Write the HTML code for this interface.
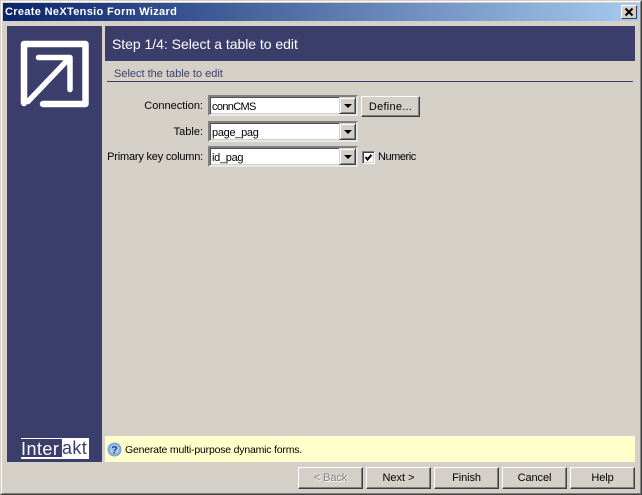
<!DOCTYPE html>
<html><head><meta charset="utf-8"><style>
*{box-sizing:border-box}
html,body{margin:0;padding:0;width:642px;height:495px;overflow:hidden;background:#d4d0c8;font-family:"Liberation Sans",sans-serif;font-size:11px;color:#000}
.a{position:absolute}
.t{position:absolute;white-space:nowrap;line-height:13px}
.win{left:0;top:0;width:642px;height:495px;border:1px solid;border-color:#d4d0c8 #404040 #404040 #d4d0c8}
.win2{left:1px;top:1px;width:640px;height:493px;border:1px solid;border-color:#fff #808080 #808080 #fff}
.title{left:3px;top:3px;width:636px;height:18px;background:linear-gradient(90deg,#0a246a,#a6caf0)}
.btn{position:absolute;height:22px;width:65px;background:#d4d0c8;border:1px solid;border-color:#fff #404040 #404040 #fff;box-shadow:inset -1px -1px 0 #808080;text-align:center;line-height:21px;letter-spacing:-.1px}
.combo{position:absolute;left:208px;width:150px;height:21px;background:#fff;border:2px solid;border-color:#808080 #e8e8e8 #e8e8e8 #808080;box-shadow:inset 1px 1px 0 #505050,inset -1px -1px 0 #d4d0c8}
.combo span{position:absolute;left:2px;top:3px;line-height:14px}
.arr{position:absolute;right:0;top:0;width:17px;height:17px;background:#d4d0c8;border:1px solid;border-color:#d4d0c8 #404040 #404040 #d4d0c8;box-shadow:inset 1px 1px 0 #fff,inset -1px -1px 0 #808080}
.arr:after{content:"";position:absolute;left:4px;top:6px;border:4px solid transparent;border-top:4px solid #000;border-bottom:0}
.l{text-align:right;right:439px}
</style></head><body>
<div class="a win"></div><div class="a win2"></div>
<div class="a title"></div>
<div class="t" style="left:5px;top:6px;color:#fff;font-weight:bold;font-size:11px;letter-spacing:.33px">Create NeXTensio Form Wizard</div>
<div class="a" style="left:621px;top:5px;width:16px;height:14px;background:#d4d0c8;border:1px solid;border-color:#fff #404040 #404040 #fff">
<svg width="14" height="12" style="display:block"><path d="M3.500 2.500L10.500 9.500M10.500 2.500L3.500 9.500" stroke="#000" stroke-width="2"/></svg></div>

<div class="a" style="left:7px;top:26px;width:95px;height:436px;background:#3b3e6b"></div>
<svg class="a" style="left:7px;top:26px" width="95" height="100"><g transform="translate(-7 -26)" fill="none" stroke="#fff" stroke-linecap="round" stroke-linejoin="round"><path stroke-width="6.500" d="M24 103V44H85.500V104H43"/><path stroke-width="5.500" d="M38.500 57.500H70V89.500M70 57.500L28 101.500"/></g></svg>
<div class="a" style="left:21px;top:438px;width:68px;height:21px;overflow:hidden;border-top:1px solid #fff;border-bottom:2px solid #fff"></div>
<div class="t" style="left:21px;top:439px;color:#fff;font-size:18px;line-height:20px;letter-spacing:.45px">Inter</div>
<div class="a" style="left:62px;top:438px;width:27px;height:20px;background:#fff;color:#3b3e6b;font-size:18px;line-height:21px;letter-spacing:.4px;white-space:nowrap;overflow:hidden">akt</div>

<div class="a" style="left:105px;top:26px;width:530px;height:35px;background:#3b3e6b"></div>
<div class="t" style="left:112px;top:36px;color:#fff;font-size:14px;line-height:16px;letter-spacing:-.03px">Step 1/4: Select a table to edit</div>
<div class="t" style="left:114px;top:68px;color:#3b3e6b">Select the table to edit</div>
<div class="a" style="left:107px;top:81px;width:526px;height:1px;background:#3b3e6b"></div>

<div class="t l" style="top:100px">Connection:</div>
<div class="combo" style="top:95px"><span style="letter-spacing:-.65px">connCMS</span><div class="arr"></div></div>
<div class="btn" style="left:361px;top:96px;width:59px;height:21px;letter-spacing:.25px;line-height:20px">Define...</div>
<div class="t l" style="top:126px">Table:</div>
<div class="combo" style="top:121px"><span style="letter-spacing:-.3px">page_pag</span><div class="arr"></div></div>
<div class="t l" style="top:151px;letter-spacing:-.2px">Primary key column:</div>
<div class="combo" style="top:146px"><span style="letter-spacing:-.3px">id_pag</span><div class="arr"></div></div>
<div class="a" style="left:362px;top:151px;width:13px;height:13px;background:#fff;border:1px solid;border-color:#808080 #fff #fff #808080;box-shadow:inset 1px 1px 0 #404040,inset -1px -1px 0 #d4d0c8">
<svg width="11" height="11" style="display:block"><path d="M2.500 5L4.500 7.500L8.500 2.800" fill="none" stroke="#000" stroke-width="2"/></svg></div>
<div class="t" style="left:378px;top:151px;letter-spacing:-.45px">Numeric</div>

<div class="a" style="left:105px;top:436px;width:530px;height:26px;background:#ffffcc"></div>
<svg class="a" style="left:107px;top:442px" width="15" height="15"><circle cx="7.500" cy="7.500" r="7" fill="#7ba7d9"/><circle cx="7.500" cy="7.500" r="5" fill="#a9c8ea"/><text x="7.500" y="11.500" text-anchor="middle" font-family="Liberation Sans" font-weight="bold" font-size="11" fill="#1f3f7f">?</text></svg>
<div class="t" style="left:125px;top:444px;font-size:10.500px;letter-spacing:-.2px">Generate multi-purpose dynamic forms.</div>

<div class="btn" style="left:298px;top:467px;color:#808080;text-shadow:1px 1px 0 #fff">&lt; Back</div>
<div class="btn" style="left:366px;top:467px;letter-spacing:0">Next &gt;</div>
<div class="btn" style="left:434px;top:467px">Finish</div>
<div class="btn" style="left:502px;top:467px">Cancel</div>
<div class="btn" style="left:570px;top:467px">Help</div>
</body></html>
